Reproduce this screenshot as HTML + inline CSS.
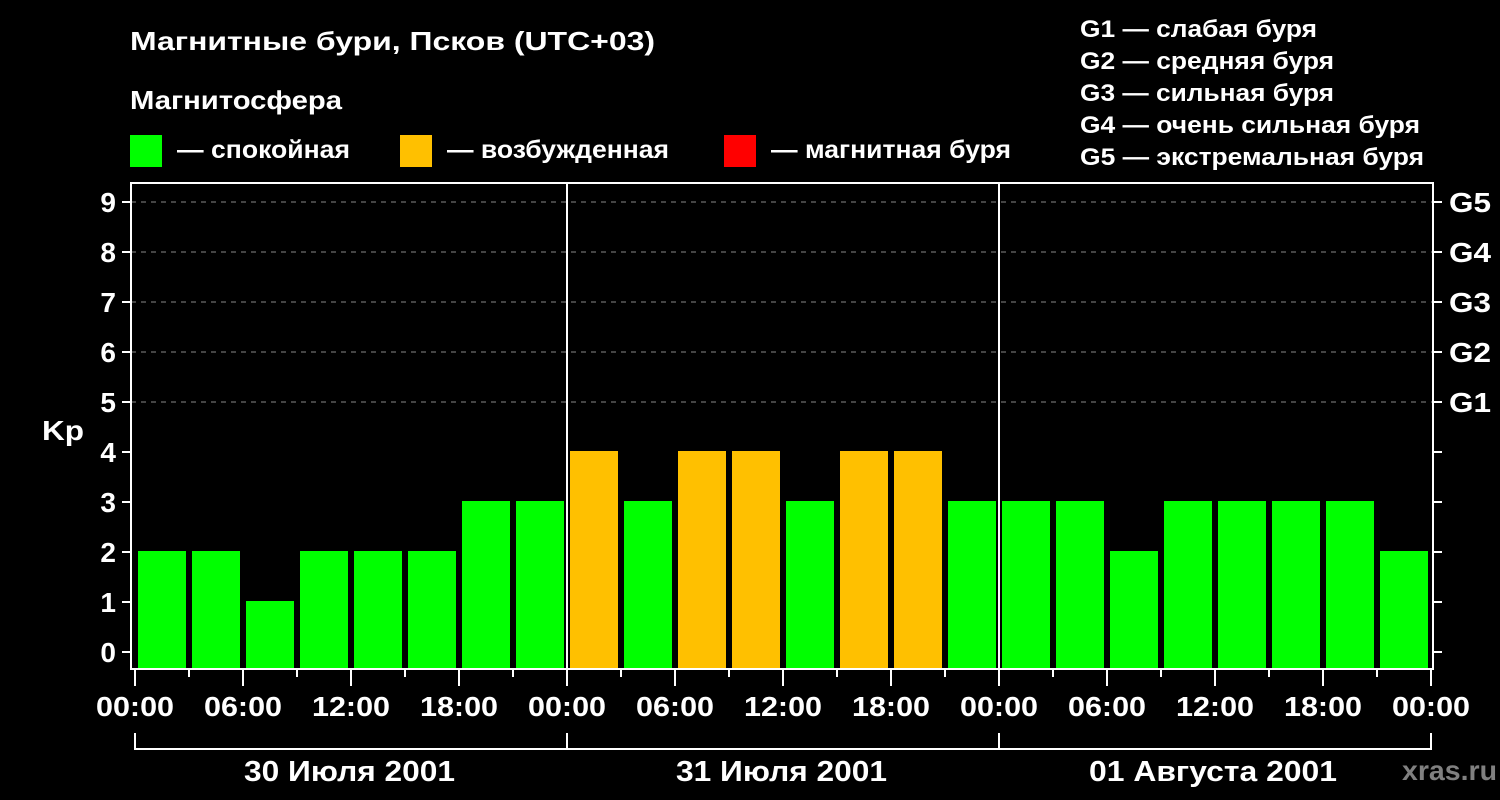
<!DOCTYPE html>
<html><head><meta charset="utf-8"><style>
html,body{margin:0;padding:0;background:#000;}
svg{display:block;}
text{font-family:"Liberation Sans",Arial,sans-serif;font-weight:bold;fill:#fff;}
</style></head><body>
<svg width="1500" height="800" viewBox="0 0 1500 800" xmlns="http://www.w3.org/2000/svg">
<rect width="1500" height="800" fill="#000"/>
<text x="130" y="50" font-size="26" textLength="525" lengthAdjust="spacingAndGlyphs">Магнитные бури, Псков (UTC+03)</text>
<text x="130" y="109" font-size="26" textLength="212" lengthAdjust="spacingAndGlyphs">Магнитосфера</text>
<rect x="130" y="135" width="32" height="32" fill="#00ff00"/>
<text x="177" y="158" font-size="25" textLength="173" lengthAdjust="spacingAndGlyphs">— спокойная</text>
<rect x="400" y="135" width="32" height="32" fill="#ffc000"/>
<text x="447" y="158" font-size="25" textLength="222" lengthAdjust="spacingAndGlyphs">— возбужденная</text>
<rect x="724" y="135" width="32" height="32" fill="#ff0000"/>
<text x="771" y="158" font-size="25" textLength="240" lengthAdjust="spacingAndGlyphs">— магнитная буря</text>
<g font-size="24">
<text x="1080" y="37" textLength="237" lengthAdjust="spacingAndGlyphs">G1 — слабая буря</text>
<text x="1080" y="69" textLength="254" lengthAdjust="spacingAndGlyphs">G2 — средняя буря</text>
<text x="1080" y="101" textLength="254" lengthAdjust="spacingAndGlyphs">G3 — сильная буря</text>
<text x="1080" y="133" textLength="340" lengthAdjust="spacingAndGlyphs">G4 — очень сильная буря</text>
<text x="1080" y="165" textLength="344" lengthAdjust="spacingAndGlyphs">G5 — экстремальная буря</text>
</g>
<g stroke="#888" stroke-width="1" stroke-dasharray="5,5">
<line x1="131" y1="202" x2="1432" y2="202"/>
<line x1="131" y1="252" x2="1432" y2="252"/>
<line x1="131" y1="302" x2="1432" y2="302"/>
<line x1="131" y1="352" x2="1432" y2="352"/>
<line x1="131" y1="402" x2="1432" y2="402"/>
</g>
<g fill="#00ff00">
<rect x="138" y="551" width="48" height="117"/>
<rect x="192" y="551" width="48" height="117"/>
<rect x="246" y="601" width="48" height="67"/>
<rect x="300" y="551" width="48" height="117"/>
<rect x="354" y="551" width="48" height="117"/>
<rect x="408" y="551" width="48" height="117"/>
<rect x="462" y="501" width="48" height="167"/>
<rect x="516" y="501" width="48" height="167"/>
<rect x="624" y="501" width="48" height="167"/>
<rect x="786" y="501" width="48" height="167"/>
<rect x="948" y="501" width="48" height="167"/>
<rect x="1002" y="501" width="48" height="167"/>
<rect x="1056" y="501" width="48" height="167"/>
<rect x="1110" y="551" width="48" height="117"/>
<rect x="1164" y="501" width="48" height="167"/>
<rect x="1218" y="501" width="48" height="167"/>
<rect x="1272" y="501" width="48" height="167"/>
<rect x="1326" y="501" width="48" height="167"/>
<rect x="1380" y="551" width="48" height="117"/>
</g>
<g fill="#ffc000">
<rect x="570" y="451" width="48" height="217"/>
<rect x="678" y="451" width="48" height="217"/>
<rect x="732" y="451" width="48" height="217"/>
<rect x="840" y="451" width="48" height="217"/>
<rect x="894" y="451" width="48" height="217"/>
</g>
<g stroke="#fff" stroke-width="2" fill="none">
<rect x="131" y="183" width="1302" height="486"/>
<line x1="567" y1="182" x2="567" y2="686"/>
<line x1="999" y1="182" x2="999" y2="686"/>
<path d="M135 733V749H1431V733M567 733V749M999 733V749"/>
<path d="M122 652H131M122 602H131M122 552H131M122 502H131M122 452H131M122 402H131M122 352H131M122 302H131M122 252H131M122 202H131"/>
<path d="M1433 652H1442M1433 602H1442M1433 552H1442M1433 502H1442M1433 452H1442M1433 402H1442M1433 352H1442M1433 302H1442M1433 252H1442M1433 202H1442"/>
<path d="M135 669V686M189 669V677M243 669V686M297 669V677M351 669V686M405 669V677M459 669V686M513 669V677M621 669V677M675 669V686M729 669V677M783 669V686M837 669V677M891 669V686M945 669V677M1053 669V677M1107 669V686M1161 669V677M1215 669V686M1269 669V677M1323 669V686M1377 669V677M1431 669V686"/>
</g>
<g font-size="28" text-anchor="end">
<text x="116" y="662">0</text><text x="116" y="612">1</text><text x="116" y="562">2</text>
<text x="116" y="512">3</text><text x="116" y="462">4</text><text x="116" y="412">5</text>
<text x="116" y="362">6</text><text x="116" y="312">7</text><text x="116" y="262">8</text>
<text x="116" y="212">9</text>
</g>
<text x="42" y="440" font-size="28" textLength="42" lengthAdjust="spacingAndGlyphs">Kp</text>
<g font-size="28">
<text x="1449" y="212" textLength="42" lengthAdjust="spacingAndGlyphs">G5</text>
<text x="1449" y="262" textLength="42" lengthAdjust="spacingAndGlyphs">G4</text>
<text x="1449" y="312" textLength="42" lengthAdjust="spacingAndGlyphs">G3</text>
<text x="1449" y="362" textLength="42" lengthAdjust="spacingAndGlyphs">G2</text>
<text x="1449" y="412" textLength="42" lengthAdjust="spacingAndGlyphs">G1</text>
</g>
<g font-size="28">
<text x="96" y="716" textLength="78" lengthAdjust="spacingAndGlyphs">00:00</text>
<text x="204" y="716" textLength="78" lengthAdjust="spacingAndGlyphs">06:00</text>
<text x="312" y="716" textLength="78" lengthAdjust="spacingAndGlyphs">12:00</text>
<text x="420" y="716" textLength="78" lengthAdjust="spacingAndGlyphs">18:00</text>
<text x="528" y="716" textLength="78" lengthAdjust="spacingAndGlyphs">00:00</text>
<text x="636" y="716" textLength="78" lengthAdjust="spacingAndGlyphs">06:00</text>
<text x="744" y="716" textLength="78" lengthAdjust="spacingAndGlyphs">12:00</text>
<text x="852" y="716" textLength="78" lengthAdjust="spacingAndGlyphs">18:00</text>
<text x="960" y="716" textLength="78" lengthAdjust="spacingAndGlyphs">00:00</text>
<text x="1068" y="716" textLength="78" lengthAdjust="spacingAndGlyphs">06:00</text>
<text x="1176" y="716" textLength="78" lengthAdjust="spacingAndGlyphs">12:00</text>
<text x="1284" y="716" textLength="78" lengthAdjust="spacingAndGlyphs">18:00</text>
<text x="1392" y="716" textLength="78" lengthAdjust="spacingAndGlyphs">00:00</text>
</g>
<g font-size="29">
<text x="244" y="781" textLength="211" lengthAdjust="spacingAndGlyphs">30 Июля 2001</text>
<text x="676" y="781" textLength="211" lengthAdjust="spacingAndGlyphs">31 Июля 2001</text>
<text x="1089" y="781" textLength="248" lengthAdjust="spacingAndGlyphs">01 Августа 2001</text>
</g>
<text x="1402" y="780" font-size="28" textLength="95" lengthAdjust="spacingAndGlyphs" style="fill:#808080">xras.ru</text>
</svg>
</body></html>
